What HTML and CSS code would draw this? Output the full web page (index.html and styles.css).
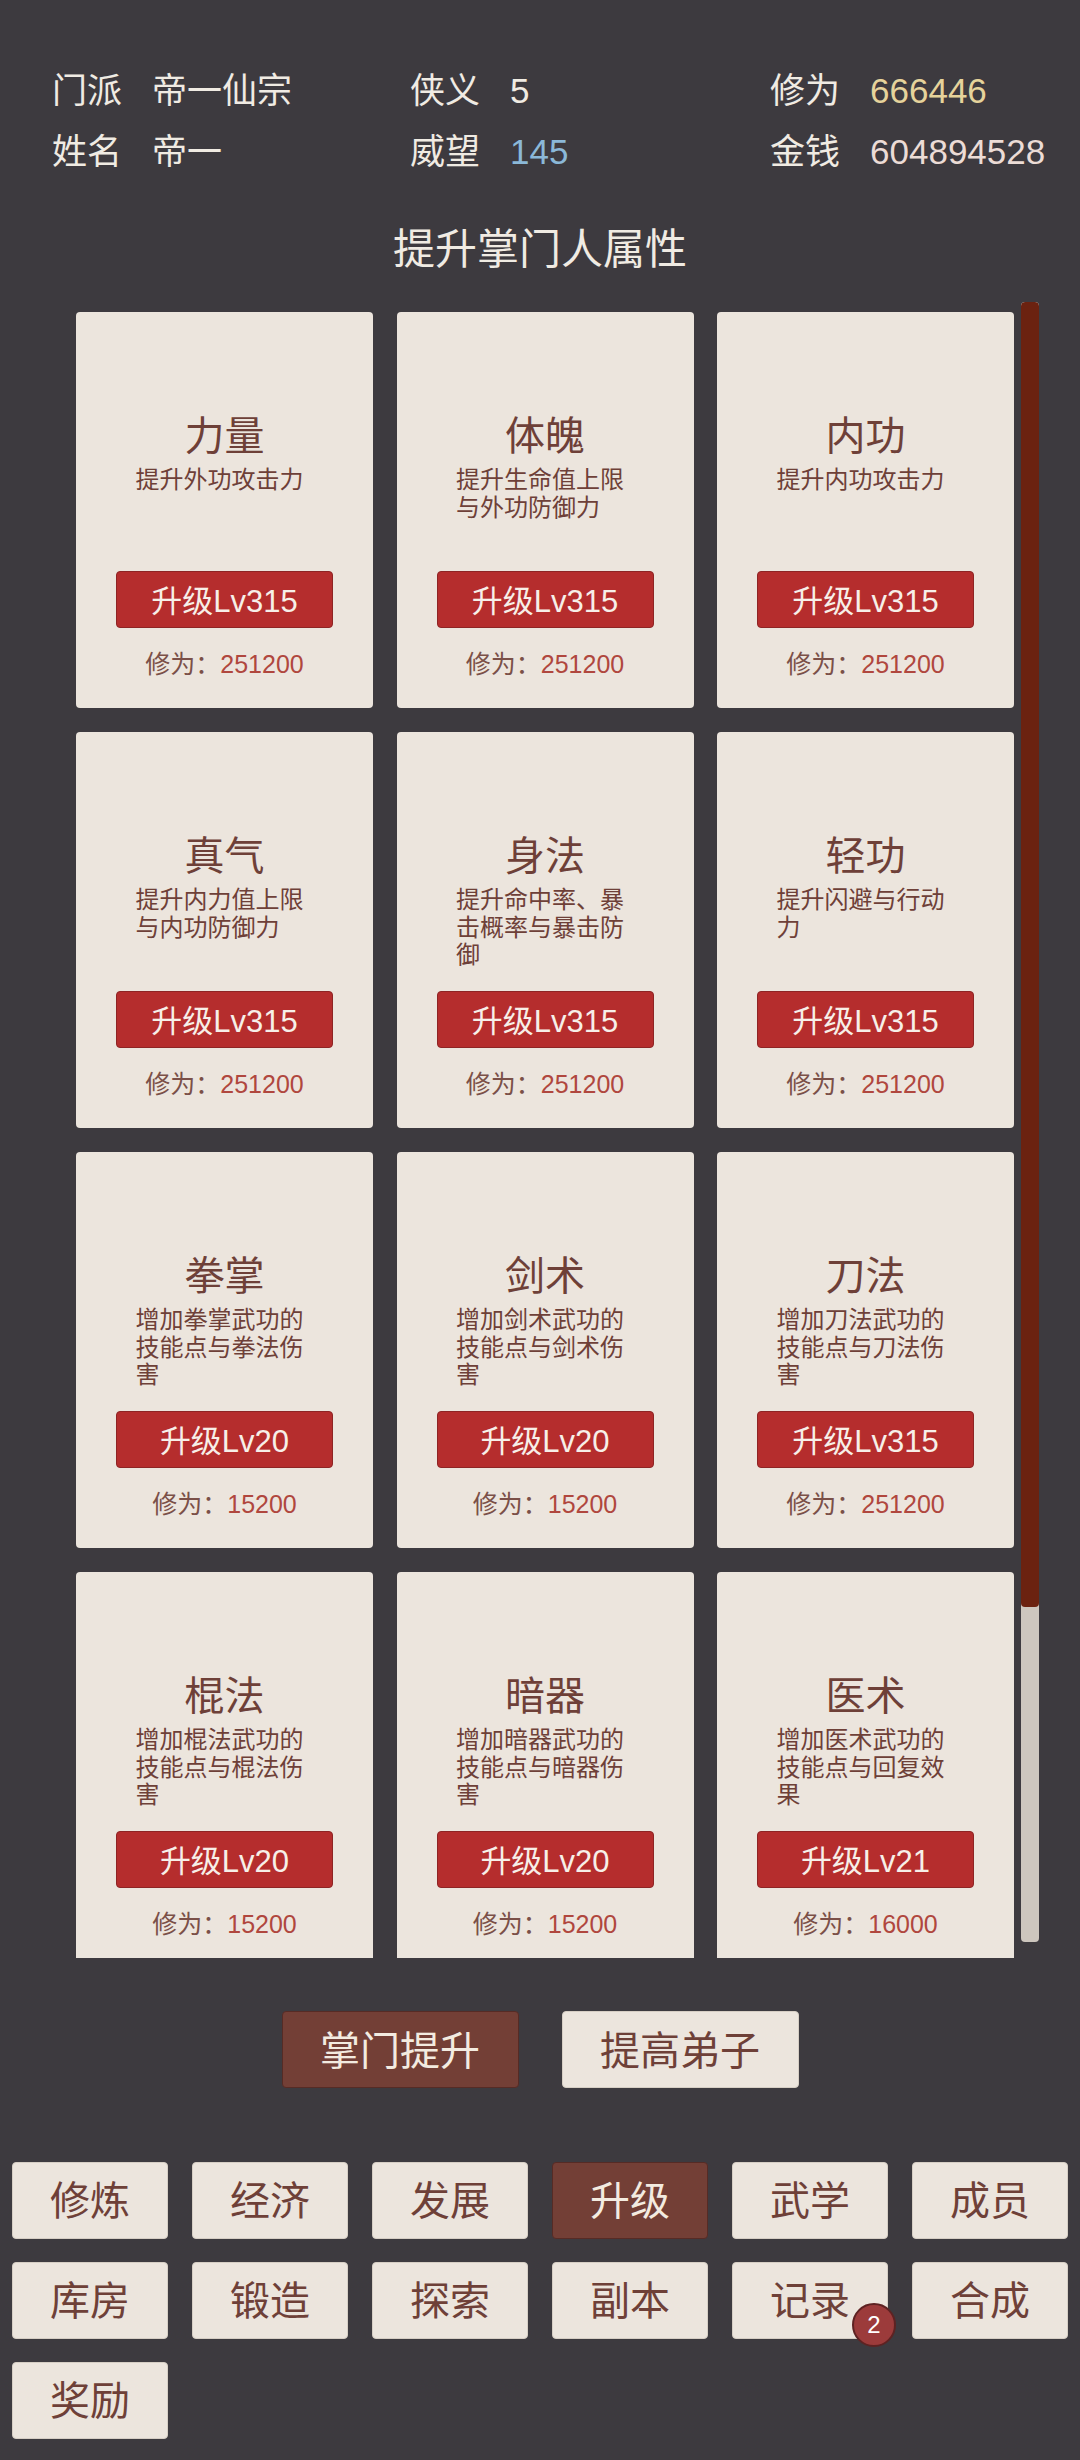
FILE: index.html
```html
<!DOCTYPE html>
<html>
<head>
  <meta charset="UTF-8">
  <title>掌门人属性</title>
  <link rel="stylesheet" href="styles.css">
</head>
<body>
  <div id="header">
    <div class="stat"><span class="label">门派</span><span>帝一仙宗</span></div>
    <div class="stat"><span class="label">侠义</span><span>5</span></div>
    <div class="stat"><span class="label">修为</span><span class="gold">666446</span></div>
    <div class="stat"><span class="label">姓名</span><span>帝一</span></div>
    <div class="stat"><span class="label">威望</span><span class="blue">145</span></div>
    <div class="stat"><span class="label">金钱</span><span class="pink">604894528</span></div>
  </div>

  <div class="page-title">提升掌门人属性</div>

  <div id="panel">
    <div class="viewport">
      <div class="card-grid">
        <div class="card">
          <div class="card-name">力量</div>
          <div class="card-desc">提升外功攻击力</div>
          <button class="card-btn">升级Lv315</button>
          <div class="card-cost">修为：<span>251200</span></div>
        </div>
        <div class="card">
          <div class="card-name">体魄</div>
          <div class="card-desc">提升生命值上限与外功防御力</div>
          <button class="card-btn">升级Lv315</button>
          <div class="card-cost">修为：<span>251200</span></div>
        </div>
        <div class="card">
          <div class="card-name">内功</div>
          <div class="card-desc">提升内功攻击力</div>
          <button class="card-btn">升级Lv315</button>
          <div class="card-cost">修为：<span>251200</span></div>
        </div>
        <div class="card">
          <div class="card-name">真气</div>
          <div class="card-desc">提升内力值上限与内功防御力</div>
          <button class="card-btn">升级Lv315</button>
          <div class="card-cost">修为：<span>251200</span></div>
        </div>
        <div class="card">
          <div class="card-name">身法</div>
          <div class="card-desc">提升命中率、暴击概率与暴击防御</div>
          <button class="card-btn">升级Lv315</button>
          <div class="card-cost">修为：<span>251200</span></div>
        </div>
        <div class="card">
          <div class="card-name">轻功</div>
          <div class="card-desc">提升闪避与行动力</div>
          <button class="card-btn">升级Lv315</button>
          <div class="card-cost">修为：<span>251200</span></div>
        </div>
        <div class="card">
          <div class="card-name">拳掌</div>
          <div class="card-desc">增加拳掌武功的技能点与拳法伤害</div>
          <button class="card-btn">升级Lv20</button>
          <div class="card-cost">修为：<span>15200</span></div>
        </div>
        <div class="card">
          <div class="card-name">剑术</div>
          <div class="card-desc">增加剑术武功的技能点与剑术伤害</div>
          <button class="card-btn">升级Lv20</button>
          <div class="card-cost">修为：<span>15200</span></div>
        </div>
        <div class="card">
          <div class="card-name">刀法</div>
          <div class="card-desc">增加刀法武功的技能点与刀法伤害</div>
          <button class="card-btn">升级Lv315</button>
          <div class="card-cost">修为：<span>251200</span></div>
        </div>
        <div class="card">
          <div class="card-name">棍法</div>
          <div class="card-desc">增加棍法武功的技能点与棍法伤害</div>
          <button class="card-btn">升级Lv20</button>
          <div class="card-cost">修为：<span>15200</span></div>
        </div>
        <div class="card">
          <div class="card-name">暗器</div>
          <div class="card-desc">增加暗器武功的技能点与暗器伤害</div>
          <button class="card-btn">升级Lv20</button>
          <div class="card-cost">修为：<span>15200</span></div>
        </div>
        <div class="card">
          <div class="card-name">医术</div>
          <div class="card-desc">增加医术武功的技能点与回复效果</div>
          <button class="card-btn">升级Lv21</button>
          <div class="card-cost">修为：<span>16000</span></div>
        </div>
      </div>
    </div>
    <div class="scroll-track"><div class="scroll-thumb"></div></div>
  </div>

  <div id="actions">
    <button class="action-btn active">掌门提升</button>
    <button class="action-btn">提高弟子</button>
  </div>

  <div id="menu">
    <button class="menu-btn">修炼</button>
    <button class="menu-btn">经济</button>
    <button class="menu-btn">发展</button>
    <button class="menu-btn active">升级</button>
    <button class="menu-btn">武学</button>
    <button class="menu-btn">成员</button>
    <button class="menu-btn">库房</button>
    <button class="menu-btn">锻造</button>
    <button class="menu-btn">探索</button>
    <button class="menu-btn">副本</button>
    <button class="menu-btn">记录<span class="badge">2</span></button>
    <button class="menu-btn">合成</button>
    <button class="menu-btn">奖励</button>
  </div>
</body>
</html>
```

FILE: styles.css
```css
body {
  margin: 0;
  font-family: "Liberation Sans", "Noto Sans CJK SC", sans-serif;
  background: #3d3a3f;
  color: #f0ebe3;
}

button {
  font-family: inherit;
  cursor: pointer;
}

#header {
  display: grid;
  grid-template-columns: 358px 360px auto;
  padding: 60px 0 0 52px;
  font-size: 35px;
  line-height: 61px;
}

.stat {
  display: flex;
  gap: 30px;
}

.gold { color: #e6d39b; }
.blue { color: #8bb8d8; }
.pink { color: #ecdcd6; }

.page-title {
  margin-top: 38px;
  font-size: 42px;
  line-height: 60px;
  text-align: center;
}

#panel {
  display: flex;
  gap: 7px;
  margin: 22px 41px 0 76px;
}

.viewport {
  flex: 1;
  height: 1656px;
  overflow: hidden;
}

.card-grid {
  display: grid;
  grid-template-columns: repeat(3, 297px);
  gap: 24px 23.5px;
  padding-top: 10px;
}

.card {
  display: flex;
  flex-direction: column;
  align-items: center;
  box-sizing: border-box;
  height: 396px;
  padding: 100px 0 29px;
  background: #ece5dd;
  border-radius: 4px;
  color: #6e4038;
}

.card-name {
  font-size: 40px;
  line-height: 48px;
}

.card-desc {
  width: 178px;
  margin-top: 6px;
  font-size: 24px;
  line-height: 27.6px;
}

.card-btn {
  display: flex;
  align-items: center;
  justify-content: center;
  margin-top: auto;
  width: 217px;
  height: 57px;
  padding: 0 0 2px;
  background: #b52d2d;
  border: 1.5px solid #8e2424;
  border-radius: 4px;
  color: #f7efe8;
  font-size: 31px;
}

.card-cost {
  margin-top: 21px;
  font-size: 25px;
  line-height: 30px;
  color: #7b5048;
}

.card-cost span {
  color: #b0473e;
}

.scroll-track {
  width: 18px;
  height: 1640px;
  background: #cdc6be;
  border-radius: 4px;
  overflow: hidden;
}

.scroll-thumb {
  height: 1305px;
  background: #6b2210;
  border-radius: 4px;
}

#actions {
  display: flex;
  justify-content: center;
  gap: 43px;
  margin-top: 53px;
}

.action-btn {
  width: 237px;
  height: 77px;
  padding: 0 0 3px;
  background: #ece5dd;
  border: 1.5px solid #d6cec4;
  border-radius: 4px;
  color: #6e4038;
  font-size: 40px;
}

.action-btn.active,
.menu-btn.active {
  background: #733f36;
  border-color: #562b25;
  color: #f3ebe0;
}

#menu {
  display: grid;
  grid-template-columns: repeat(6, 156px);
  gap: 23px 24px;
  padding: 74px 12px 30px;
}

.menu-btn {
  position: relative;
  height: 77px;
  padding: 0 0 6px;
  background: #ece5dd;
  border: 1.5px solid #d6cec4;
  border-radius: 4px;
  color: #6e4038;
  font-size: 40px;
}

.badge {
  position: absolute;
  right: -9px;
  bottom: -9px;
  width: 44px;
  height: 44px;
  box-sizing: border-box;
  border: 2px solid #5e2222;
  border-radius: 50%;
  background: #9c3b3b;
  color: #fff;
  font-size: 24px;
  line-height: 40px;
  text-align: center;
}
```
